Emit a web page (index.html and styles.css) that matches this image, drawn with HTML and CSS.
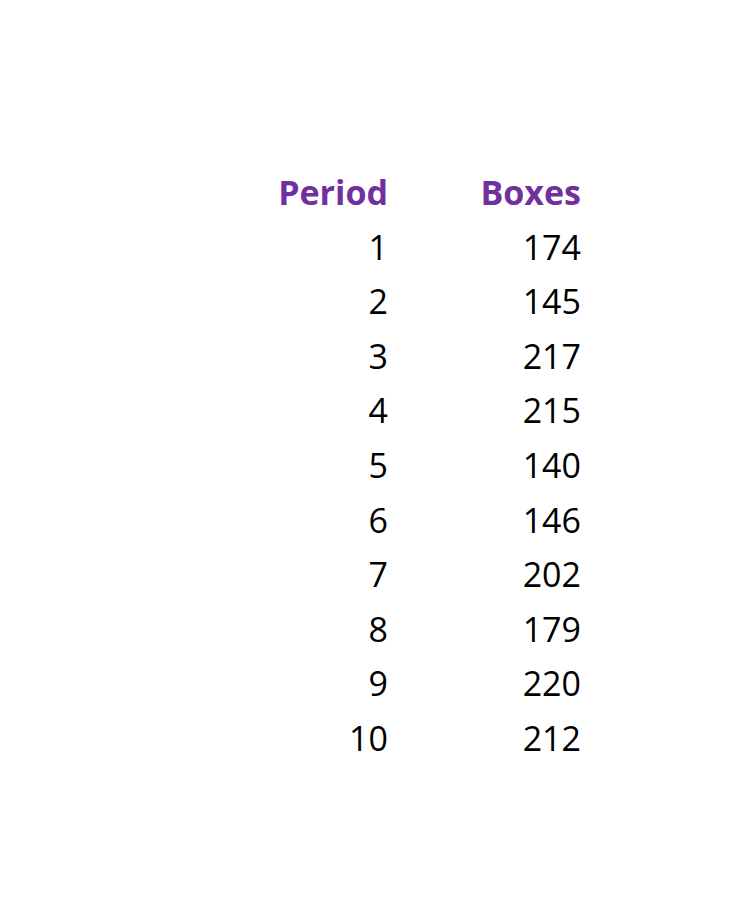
FILE: index.html
```html
<!DOCTYPE html>
<html>
<head>
<meta charset="utf-8">
<link rel="stylesheet" href="styles.css">
</head>
<body>
<div class="table">
  <div class="cell head">Period</div><div class="cell head">Boxes</div>
  <div class="cell">1</div><div class="cell">174</div>
  <div class="cell">2</div><div class="cell">145</div>
  <div class="cell">3</div><div class="cell">217</div>
  <div class="cell">4</div><div class="cell">215</div>
  <div class="cell">5</div><div class="cell">140</div>
  <div class="cell">6</div><div class="cell">146</div>
  <div class="cell">7</div><div class="cell">202</div>
  <div class="cell">8</div><div class="cell">179</div>
  <div class="cell">9</div><div class="cell">220</div>
  <div class="cell">10</div><div class="cell">212</div>
</div>
</body>
</html>
```
FILE: styles.css
```css
html, body {
  margin: 0;
  background: #ffffff;
}
body {
  width: 748px;
  height: 919px;
  font-family: "Open Sans", "Liberation Sans", sans-serif;
  color: #000000;
}
.table {
  display: grid;
  grid-template-columns: 128px 193px;
  grid-auto-rows: 54.6px;
  margin-left: 260px;
  padding-top: 165px;
}
.cell {
  text-align: right;
  font-size: 34px;
  line-height: 54.6px;
}
.head {
  font-weight: 700;
  color: #7030a0;
}
```
